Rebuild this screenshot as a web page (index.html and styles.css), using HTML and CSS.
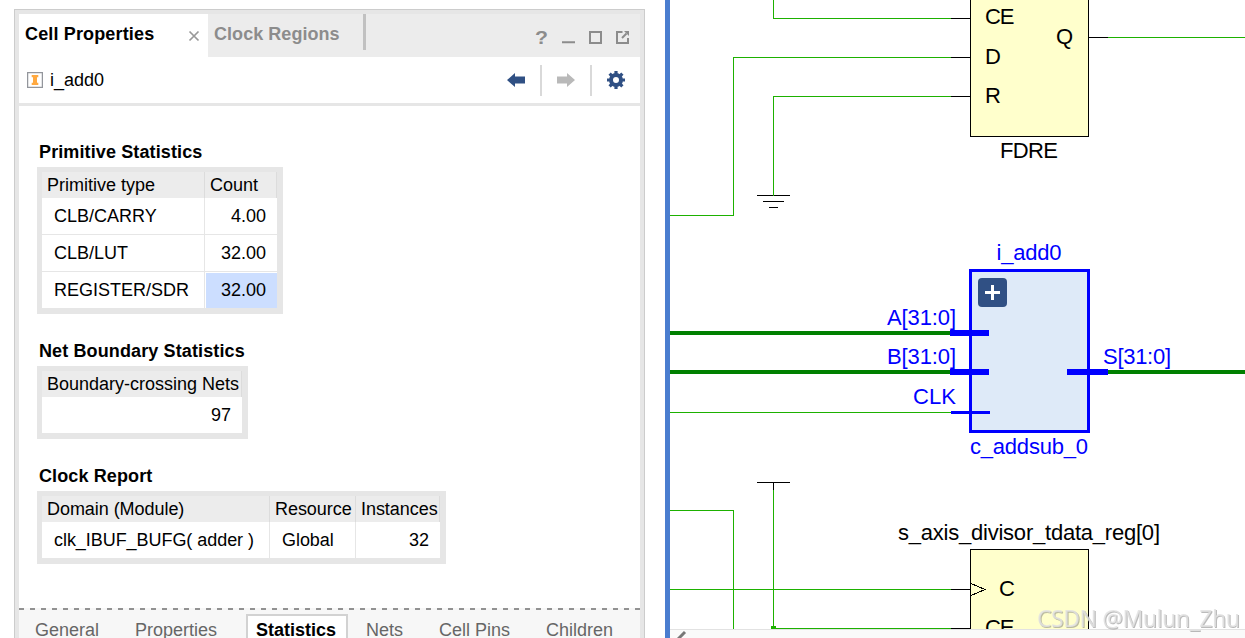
FILE: index.html
```html
<!DOCTYPE html>
<html lang="en">
<head>
<meta charset="utf-8">
<title>Cell Properties</title>
<link rel="stylesheet" href="styles.css">
</head>
<body>
<main class="app">
  <section class="panel">
    <header class="tabbar">
      <div class="tab tab-active"><span class="tab-title">Cell Properties</span>
        <svg class="close" width="12" height="12" viewBox="0 0 12 12"><path d="M1.5 1.5l9 9M10.5 1.5l-9 9"/></svg>
      </div>
      <div class="tab tab-idle"><span class="tab-title">Clock Regions</span></div>
      <svg class="window-tools" width="100" height="20" viewBox="0 0 100 20">
        <text class="help" x="0" y="16" textLength="13" lengthAdjust="spacingAndGlyphs">?</text>
        <path d="M27 14.3h13M55 4h11v11h-11zM87.500 4H82v11h11v-5"/>
        <path class="thin" d="M87 10l4.500-4.500"/><path class="tip" d="M89 3h5v5z"/>
      </svg>
    </header>
    <div class="toolbar">
      <svg class="cell-icon" width="16" height="16" viewBox="0 0 16 16"><rect x=".5" y=".5" width="15" height="15"/><path d="M4.700 3h6.600v2.300H10v5.400h1.300V13H4.700v-2.300H6V5.300H4.700z"/></svg>
      <span class="cell-name">i_add0</span>
      <div class="actions">
        <svg class="back" width="18" height="14" viewBox="0 0 18 14"><path d="M0 7l8-7v3.500h10v7H8V14z"/></svg>
        <i class="rule"></i>
        <svg class="forward" width="18" height="14" viewBox="0 0 18 14"><path d="M18 7l-8-7v3.500H0v7h10V14z"/></svg>
        <i class="rule"></i>
        <svg class="gear" width="18" height="18" viewBox="0 0 18 18"><circle cx="9" cy="9" r="5"/><path d="M9 0v4M9 14V18M0 9h4M14 9H18M2.600 2.600l2.600 2.600M12.800 12.800l2.600 2.600M2.600 15.400l2.600-2.600M12.800 5.200l2.600-2.600"/></svg>
      </div>
    </div>
    <div class="content">
      <h2>Primitive Statistics</h2>
      <div class="table primitive">
        <div class="head">Primitive type</div><div class="head">Count</div>
        <div class="cell">CLB/CARRY</div><div class="cell num">4.00</div>
        <div class="cell">CLB/LUT</div><div class="cell num">32.00</div>
        <div class="cell">REGISTER/SDR</div><div class="cell num selected">32.00</div>
      </div>
      <h2>Net Boundary Statistics</h2>
      <div class="table boundary">
        <div class="head">Boundary-crossing Nets</div>
        <div class="cell num">97</div>
      </div>
      <h2>Clock Report</h2>
      <div class="table clock">
        <div class="head">Domain (Module)</div><div class="head">Resource</div><div class="head">Instances</div>
        <div class="cell">clk_IBUF_BUFG( adder )</div><div class="cell">Global</div><div class="cell num">32</div>
      </div>
    </div>
    <nav class="subtabs">
      <span class="general">General</span><span class="properties">Properties</span><span class="current">Statistics</span><span class="nets">Nets</span><span class="pins">Cell Pins</span><span class="children">Children</span>
    </nav>
  </section>
  <section class="schematic">
    <svg class="canvas" width="575" height="629" viewBox="670 0 575 629">
      <g class="wire">
        <path d="M773.500 0V18.500H951M670 215.500H733.500V57.500H951M773.500 195V96.500H951M1108 37.500H1245M670 412.500H951M670 510.500H733.500V629M773.500 490V628.500H951M670 589.500H951"/>
        <rect class="junction" x="771" y="626" width="5" height="3"/>
      </g>
      <path class="pin" d="M951 18.500H970M951 57.500H970M951 96.500H970M1089 37.500H1108M757 195.500H790M763 201.500H784M769 207.500H778M757 482.500H790M773.500 482V490M951 589.500H970M951 628.500H970"/>
      <path class="wire" d="M773.500 190V196"/>
      <rect class="reg" x="970.500" y="-20.500" width="118" height="157"/>
      <rect class="reg" x="970.500" y="549.500" width="118" height="120"/>
      <path class="clk-edge" d="M971 583.500l14 6-14 6"/>
      <path class="bus" d="M670 333H951M670 372H951M1107 372H1245"/>
      <rect class="module" x="970.500" y="270.500" width="118" height="161"/>
      <path class="buspin" d="M950 333H989M950 372H989M1067 372H1108"/>
      <path class="clkpin" d="M951 412.500H990"/>
      <rect class="expand" x="978" y="278" width="29" height="29" rx="4"/>
      <path class="plus" d="M985 292.500h15M992.500 285v15"/>
      <g class="label">
        <text x="985" y="24" textLength="29.500">CE</text>
        <text x="985" y="64">D</text>
        <text x="985" y="103">R</text>
        <text x="1056" y="44">Q</text>
        <text x="1000" y="158" textLength="58">FDRE</text>
        <text x="898" y="540" textLength="262">s_axis_divisor_tdata_reg[0]</text>
        <text x="999" y="596">C</text>
        <text x="985" y="635" textLength="29.500">CE</text>
      </g>
      <g class="label selected-label">
        <text x="996.500" y="260" textLength="65">i_add0</text>
        <text x="887" y="325" textLength="69">A[31:0]</text>
        <text x="887" y="364" textLength="69">B[31:0]</text>
        <text x="913" y="404" textLength="43">CLK</text>
        <text x="1103" y="364" textLength="68">S[31:0]</text>
        <text x="970" y="454" textLength="118">c_addsub_0</text>
      </g>
    </svg>
    <div class="scrollbar"><svg width="10" height="8" viewBox="0 0 10 8"><path d="M8 2L1 9"/></svg></div>
    <svg class="watermark" width="210" height="32" viewBox="0 0 210 32"><text x="2" y="21" textLength="203">CSDN @Mulun_Zhu</text></svg>
  </section>
</main>
</body>
</html>
```
FILE: styles.css
```css
* { box-sizing: border-box; }
body { margin: 0; background: #fff; font: 18px/20px "Liberation Sans", Arial, sans-serif; color: #000; overflow: hidden; }
svg { display: block; flex: none; }
.app { display: flex; width: 1245px; height: 638px; padding-left: 14px; overflow: hidden; }

.panel { width: 631px; height: 640px; margin-top: 9px; flex: none; display: flex; flex-direction: column; border: 1px solid #ccc; box-shadow: inset 0 0 0 4px #e6e6e6; padding: 4px; }
.tabbar { height: 43px; flex: none; display: flex; background: #ececec; font-weight: bold; }
.tab { display: flex; white-space: nowrap; padding: 10px 0 0 6px; letter-spacing: .15px; }
.tab-active { width: 189px; background: #fff; justify-content: space-between; padding-right: 8px; }
.close { margin-top: 6px; fill: none; stroke: #999; stroke-width: 1.7; }
.tab-idle { width: 158px; height: 36px; color: #8c8c8c; border-right: 3px solid #c1c1c1; letter-spacing: .05px; }
.window-tools { margin: 14px 0 0 169px; fill: none; stroke: #8c8c8c; stroke-width: 2; }
.help { font: bold 19px "Liberation Sans", sans-serif; fill: #8c8c8c; stroke: none; }
.tip { fill: #8c8c8c; stroke: none; }
.toolbar { height: 49px; flex: none; display: flex; align-items: center; border-bottom: 3px solid #e6e6e6; padding: 0 15px 0 8px; }
.cell-icon rect { fill: #fff; stroke: #93969c; stroke-width: 1.500; }
.cell-icon path { fill: #ffa940; }
.cell-name { margin-left: 7px; }
.actions { margin-left: auto; display: flex; align-items: center; }
.rule { width: 2px; height: 31px; background: #d9d9d9; margin: 0 15px; }
.back, .gear { fill: #305084; }
.forward { fill: #b9b9b9; }
.gear circle { fill: none; stroke: #305084; stroke-width: 4; }
.gear path { stroke: #305084; stroke-width: 3.2; }

.content { flex: none; height: 502px; padding: 31px 0 0 18px; }
h2 { margin: 0 0 0 2px; font-size: 18px; line-height: 30px; height: 30px; white-space: nowrap; letter-spacing: .12px; }
.table { display: grid; border: solid #e6e6e6; border-width: 5px 6px 6px 5px; grid-template-rows: 26px; margin-bottom: 22px; white-space: nowrap; background: #fff; }
.primitive { width: 246px; grid-template-columns: 163px 72px; grid-auto-rows: 37px; height: 147px; }
.boundary { width: 211px; grid-template-columns: 200px; grid-auto-rows: 36px; }
.clock { width: 409px; grid-template-columns: 228px 86px 84px; grid-auto-rows: 36px; }
.head { background: #ececec; padding: 3px 0 0 5px; box-shadow: inset -1px 0 #dcdcdc; }
.cell { padding: 8px 11px 0 12px; box-shadow: inset -1px 0 #e6e6e6, inset 0 -1px #e6e6e6; }
.num { text-align: right; box-shadow: inset 0 -1px #e6e6e6; }
.boundary .num, .clock .num { box-shadow: none; }
.clock .cell:not(.num) { box-shadow: inset -1px 0 #e6e6e6; }
.clock .head, .clock .cell { letter-spacing: -.05px; }
.selected { margin: 1px 0 1px 1px; padding-top: 7px; background: #ccdeff; box-shadow: none; }

.subtabs { height: 40px; flex: none; display: flex; padding: 6px 0 0 16px; color: #666; background: repeating-linear-gradient(90deg, #929292 0 5px, transparent 5px 11px) 0 0 / 100% 2px no-repeat, #f7f7f7; white-space: nowrap; }
.subtabs span { padding-top: 6px; }
.general { width: 100px; }
.properties { width: 111px; }
.subtabs .current { width: 102px; padding: 4px 0 0 8px; border: 2px solid #d2d2d2; background: #fff; color: #000; font-weight: bold; height: 40px; }
.nets { width: 73px; margin-left: 18px; }
.pins { width: 107px; }

.schematic { position: relative; width: 580px; height: 638px; margin-left: 20px; border-left: 5px solid #4a7dcf; flex: none; }
.canvas { shape-rendering: crispEdges; }
.wire { fill: none; stroke: #1db100; }
.junction { fill: #1db100; stroke: none; }
.pin, .clk-edge { fill: none; stroke: #000; }
.reg { fill: #ffffcc; stroke: #000; }
.bus { stroke: #008000; stroke-width: 4; }
.module { fill: #deeaf8; stroke: #0000ff; stroke-width: 3; }
.buspin { stroke: #0000ff; stroke-width: 5.500; }
.clkpin { stroke: #0000ff; stroke-width: 3; }
.expand { fill: #305084; shape-rendering: auto; }
.plus { stroke: #fff; stroke-width: 3; }
.label { font-size: 22px; fill: #000; }
.selected-label { fill: #0000ff; }
.scrollbar { height: 9px; border-top: 1px solid #e2e2e2; background: #fafafa; padding-left: 7px; }
.scrollbar path { stroke: #777; stroke-width: 3; }
.watermark { position: absolute; left: 365px; top: 606px; font: 23px "Noto Sans", sans-serif; fill: #e2e2e2; fill-opacity: .85; filter: drop-shadow(1px 1px .6px rgba(110, 110, 110, .55)); }
```
